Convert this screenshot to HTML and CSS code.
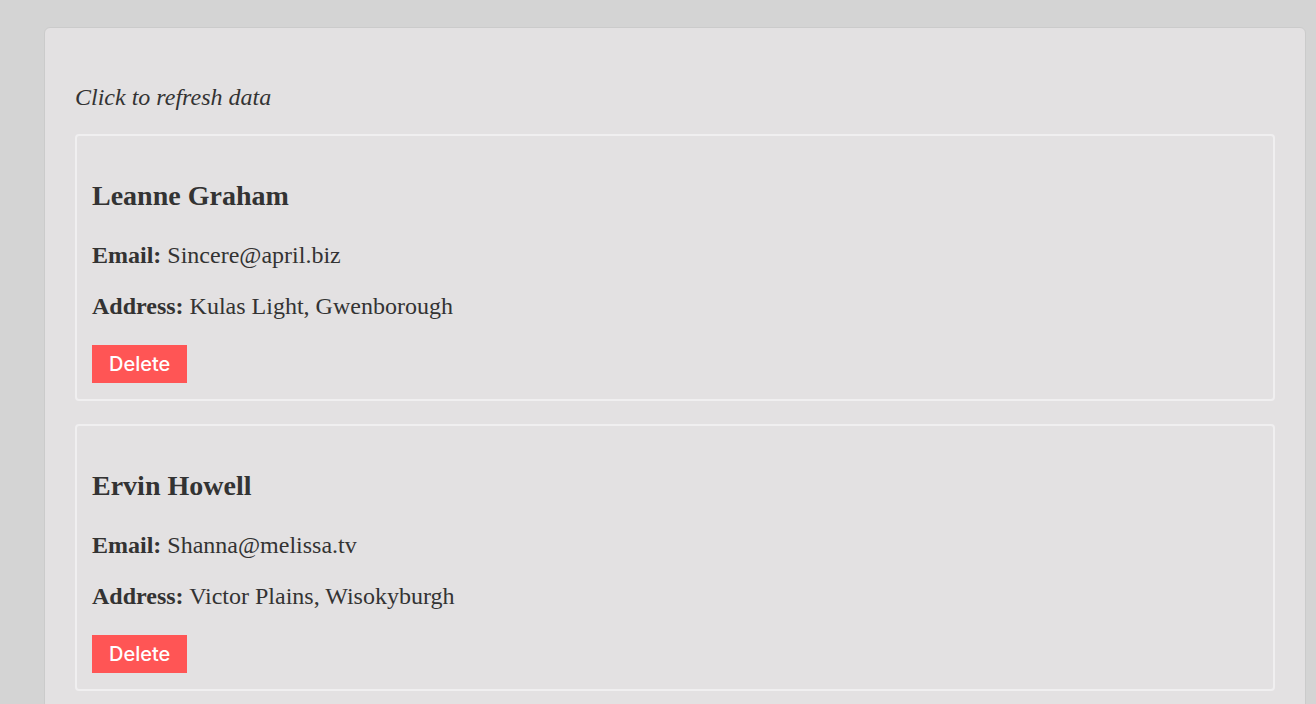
FILE: index.html
```html
<!DOCTYPE html>
<html>
<head>
<meta charset="utf-8">
<link rel="stylesheet" href="styles.css">
</head>
<body>
<div class="panel">
  <p class="hint">Click to refresh data</p>
  <div class="card">
    <h3 class="name">Leanne Graham</h3>
    <p class="field"><b>Email:</b> Sincere@april.biz</p>
    <p class="field"><b>Address:</b> Kulas Light, Gwenborough</p>
    <button class="delete">Delete</button>
  </div>
  <div class="card">
    <h3 class="name">Ervin Howell</h3>
    <p class="field"><b>Email:</b> Shanna@melissa.tv</p>
    <p class="field"><b>Address:</b> Victor Plains, Wisokyburgh</p>
    <button class="delete">Delete</button>
  </div>
</div>
</body>
</html>
```
FILE: styles.css
```css
html, body {
  margin: 0;
  padding: 0;
  background: #d4d4d4;
  height: 100%;
  overflow: hidden;
}
body {
  padding: 27px 10px 0 44px;
  font-family: "Liberation Serif", "Times New Roman", serif;
  font-size: 24px;
  color: #333;
}
.panel {
  background: #e3e1e2;
  border: 1px solid #cbcbcb;
  border-radius: 6px;
  padding: 32px 30px 30px;
}
.hint {
  margin: 24px 0 23px;
  font-style: italic;
}
.card {
  border: 2px solid #f0eff0;
  border-radius: 4px;
  padding: 15px 15px 16px;
  margin-bottom: 23px;
}
.name {
  font-size: 28px;
  margin: 29px 0 30px;
}
.field {
  margin: 24px 0;
}
.delete {
  display: block;
  margin: 25px 0 0;
  height: 38px;
  padding: 0 17px;
  border: none;
  border-radius: 0;
  background: #ff5555;
  color: #fff;
  font-family: Inter, "Helvetica Neue", Arial, sans-serif;
  font-weight: 500;
  font-size: 20px;
}
```
